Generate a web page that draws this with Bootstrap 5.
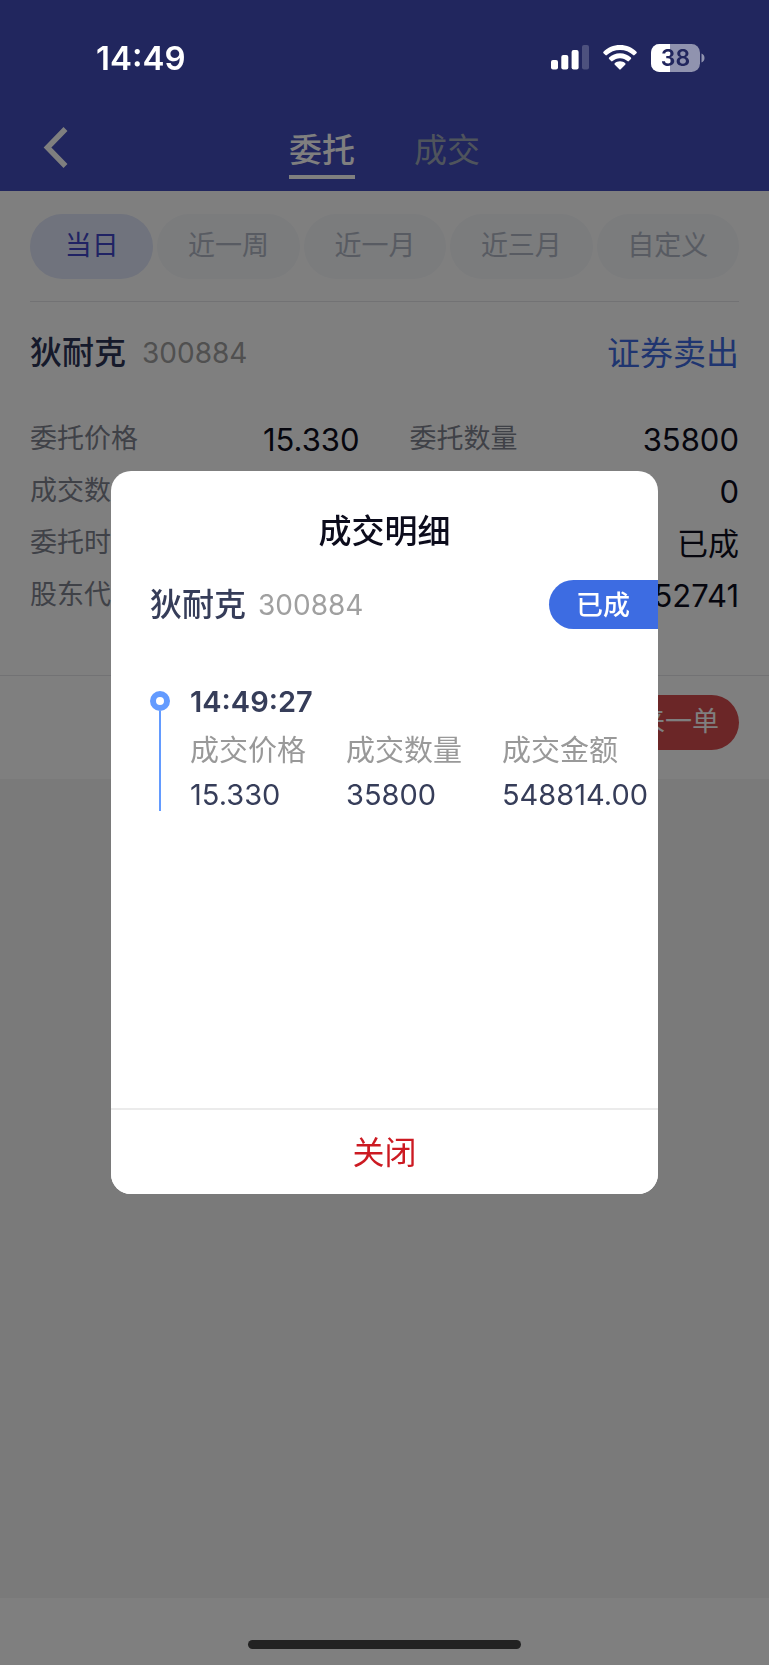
<!DOCTYPE html>
<html lang="zh-CN">
<head>
<meta charset="utf-8">
<meta name="viewport" content="width=device-width, initial-scale=1">
<title>委托</title>
<link href="https://cdn.jsdelivr.net/npm/bootstrap@5.3.0/dist/css/bootstrap.min.css" rel="stylesheet">
<style>
  body { font-family: Inter, "Noto Sans CJK SC", sans-serif; font-size: 27px; line-height: 40px; color: #0c0c1c; }
  a { text-decoration: none; }
  .app { min-height: 100vh; background: #f4f4f4; }

  /* header */
  .app-header { background: #424cbc; height: 191px; }
  .status-bar { z-index: 1070; height: 115px; padding: 0 64px 0 96px; color: #fff; }
  .clock { font-size: 33px; font-weight: 600; }
  .status-icons { gap: 14px; }
  .nav-bar { display: grid; grid-template-columns: 1fr auto 1fr; padding: 0 43px; height: 66px; align-items: center; }
  .tab-link { font-size: 33px; line-height: 50px; color: #9ea8b8; border-bottom: 4px solid transparent; margin-top: 7px; }
  .tab-link.active { color: #fff; font-weight: 500; border-color: #fff; }
  .tabs { gap: 59px; }

  /* filters */
  .filters { margin: 0 30px; padding: 23px 0 22px; gap: 4px; border-bottom: 1px solid #e4e4e8; }
  .pill { flex: 142 1 0; height: 65px; padding: 0; font-size: 27px; color: #b0b6c4; background: #f6f8fb; border: 0; }
  .pill.active { flex-grow: 123; color: #4046c8; background: #e0e6fa; }

  /* order */
  .order-head { padding: 31px 30px 0; }
  .stock { font-size: 32px; font-weight: 500; color: #2c3456; margin: 0; line-height: 40px; }
  .code { font-size: 28px; color: #a0a0a0; }
  .side { font-size: 33px; color: #3e6be0; }
  .facts { display: grid; grid-template-columns: 1fr 1fr; column-gap: 50px; padding: 40px 30px 54px; margin: 0; line-height: 52px; }
  .fact dt { font-weight: 400; color: #7e838f; }
  .fact dd { margin: 0 0 0 auto; padding-top: 2px; line-height: 50px; font-size: 31px; }
  .order-foot { border-top: 1px solid #e4e4e8; padding: 19px 30px 29px; }
  .again { background: #d64c4e; color: #fff; font-size: 27px; line-height: 40px; padding: 7px 20px 8px; border: 0; }

  .home-area { height: 67px; padding-bottom: 16px; }
  .home-bar { width: 273px; height: 9px; background: #444; }

  /* dialog */
  .deal-dialog { max-width: none; width: auto; margin: 0 111px; min-height: 100%; }
  .deal { border: 0; border-radius: 20px; overflow: hidden; min-height: 723px; color: #363d59; }
  .deal-title { font-size: 33px; font-weight: 500; line-height: 40px; color: #0c0c1c; margin: 40px 0 29px; }
  .deal .stock { color: #363d59; }
  .status-tag { background: #3d6ce2; color: #fff; font-weight: 500; height: 49px; line-height: 51px; padding: 0 28px 0 27px; border-radius: 25px 0 0 25px; }
  .ps-deal { padding-left: 39px; }
  .timeline { margin-top: 53px; gap: 20px; }
  .rail { width: 20px; padding-top: 9px; }
  .rail-dot { width: 20px; height: 20px; border: 6px solid #639bff; }
  .rail-line { width: 2px; background: #639bff; margin-bottom: 4px; }
  .deal-time { font-size: 29px; font-weight: 600; margin-bottom: 9px; }
  .metric { font-size: 29px; }
  .metric dt { font-weight: 400; color: #999; margin-bottom: 4px; }
  .metric dd { margin: 0; }
  .close-btn { font-size: 32px; line-height: 40px; color: #cc1a22; border: 0; border-top: 2px solid #ebebeb; padding: 23px 0 21px; background: #fff; }
</style>
</head>
<body>
<div class="app d-flex flex-column">
  <header class="app-header">
    <div class="status-bar position-relative d-flex align-items-center justify-content-between">
      <span class="clock">14:49</span>
      <div class="status-icons d-flex align-items-center">
        <svg width="38" height="25" viewBox="0 0 38 25" fill="#fff" aria-hidden="true"><rect y="15" width="7" height="9.500" rx="2"/><rect x="10.300" y="10" width="7" height="14.500" rx="2"/><rect x="20.600" y="5" width="7" height="19.500" rx="2"/><rect x="31" width="7" height="24.500" rx="2" fill-opacity=".2"/></svg>
        <svg width="34" height="25" viewBox="0 0 34 25" fill="#fff" aria-hidden="true"><path d="M17 0C10.400 0 4.500 2.500.500 6.700c-.5.500-.5 1 0 1.500l1.900 1.900c.5.500 1 .5 1.500 0C7.300 6.800 11.900 4.900 17 4.900s9.700 1.900 13.100 5.200c.5.500 1 .5 1.500 0l1.900-1.900c.5-.5.5-1 0-1.500C29.500 2.500 23.600 0 17 0z"/><path d="M17 8.300c-4.300 0-8.100 1.600-10.900 4.300-.5.500-.5 1 0 1.500l2 2c.5.500 1 .5 1.500 0 1.900-1.800 4.500-2.900 7.400-2.900s5.500 1.100 7.400 2.900c.5.500 1 .5 1.500 0l2-2c.5-.5.5-1 0-1.500C25.100 9.900 21.300 8.300 17 8.300z"/><path d="M17 16.300c-2 0-3.800.7-5.200 1.900-.5.400-.5 1 0 1.500l4.500 4.600c.5.500.9.500 1.400 0l4.500-4.600c.5-.5.5-1.100 0-1.500-1.400-1.200-3.200-1.900-5.200-1.900z"/></svg>
        <svg width="54" height="28" viewBox="0 0 54 28" role="img" aria-label="38"><defs><clipPath id="cell"><rect width="49" height="28" rx="8.500"/></clipPath></defs><g clip-path="url(#cell)"><rect width="49" height="28" fill="#fff" fill-opacity=".5"/><rect width="19" height="28" fill="#fff"/></g><path d="M50.500 9.500c2 .6 3 2.400 3 4.500s-1 3.900-3 4.500z" fill="#fff" fill-opacity=".5"/><text x="24.500" y="22" text-anchor="middle" font-family="Inter, sans-serif" font-size="23" font-weight="600" fill="#21265e">38</text></svg>
      </div>
    </div>
    <nav class="nav-bar">
      <a href="#" aria-label="返回" class="d-flex"><svg width="25" height="42" viewBox="0 0 25 42" fill="none" stroke="#fff" stroke-width="5.500"><path d="M22.500 2L4.500 20.500l18 18.500"/></svg></a>
      <div class="tabs d-flex">
        <a href="#" class="tab-link active">委托</a>
        <a href="#" class="tab-link">成交</a>
      </div>
    </nav>
  </header>

  <main class="bg-white">
    <div class="filters d-flex">
      <button class="btn pill rounded-pill active" type="button">当日</button>
      <button class="btn pill rounded-pill" type="button">近一周</button>
      <button class="btn pill rounded-pill" type="button">近一月</button>
      <button class="btn pill rounded-pill" type="button">近三月</button>
      <button class="btn pill rounded-pill" type="button">自定义</button>
    </div>
    <div class="order-head d-flex align-items-center">
      <h2 class="stock">狄耐克</h2>
      <span class="code ms-3">300884</span>
      <a href="#" class="side ms-auto">证券卖出</a>
    </div>
    <dl class="facts">
      <div class="fact d-flex"><dt>委托价格</dt><dd>15.330</dd></div>
      <div class="fact d-flex"><dt>委托数量</dt><dd>35800</dd></div>
      <div class="fact d-flex"><dt>成交数</dt></div>
      <div class="fact d-flex"><dd>0</dd></div>
      <div class="fact d-flex"><dt>委托时</dt></div>
      <div class="fact d-flex"><dd>已成</dd></div>
      <div class="fact d-flex"><dt>股东代</dt></div>
      <div class="fact d-flex"><dd>52741</dd></div>
    </dl>
    <div class="order-foot d-flex justify-content-end">
      <button class="btn again rounded-pill" type="button">来一单</button>
    </div>
  </main>

  <footer class="home-area bg-white mt-auto d-flex align-items-end justify-content-center">
    <div class="home-bar rounded-pill"></div>
  </footer>
</div>

<div class="modal-backdrop show"></div>
<div class="modal d-block" tabindex="-1" role="dialog" aria-labelledby="dealTitle">
  <div class="modal-dialog modal-dialog-centered deal-dialog">
    <div class="modal-content deal">
      <h1 class="deal-title text-center" id="dealTitle">成交明细</h1>
      <div class="ps-deal d-flex align-items-center">
        <h2 class="stock">狄耐克</h2>
        <span class="code ms-2 ps-1">300884</span>
        <span class="status-tag ms-auto">已成</span>
      </div>
      <div class="timeline ps-deal d-flex">
        <div class="rail d-flex flex-column align-items-center">
          <span class="rail-dot rounded-circle"></span>
          <span class="rail-line flex-grow-1"></span>
        </div>
        <div class="flex-grow-1">
          <div class="deal-time">14:49:27</div>
          <dl class="row g-0 mb-0">
            <div class="metric col-4"><dt>成交价格</dt><dd>15.330</dd></div>
            <div class="metric col-4"><dt>成交数量</dt><dd>35800</dd></div>
            <div class="metric col-4"><dt>成交金额</dt><dd>548814.00</dd></div>
          </dl>
        </div>
      </div>
      <button class="close-btn w-100 mt-auto" type="button">关闭</button>
    </div>
  </div>
</div>
<script src="https://cdn.jsdelivr.net/npm/bootstrap@5.3.0/dist/js/bootstrap.bundle.min.js"></script>
</body>
</html>
